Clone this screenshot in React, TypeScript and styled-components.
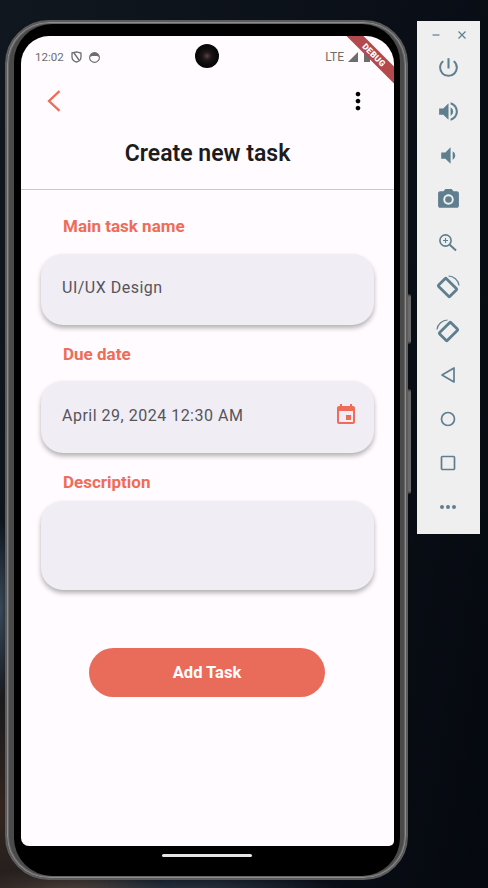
import React from "react";
import styled, { createGlobalStyle } from "styled-components";
import {
  MdPowerSettingsNew,
  MdVolumeUp,
  MdVolumeDown,
  MdCameraAlt,
  MdEvent,
  MdMoreVert,
} from "react-icons/md";

const GlobalStyle = createGlobalStyle`
  html, body {
    margin: 0;
    padding: 0;
    background: #070b12;
  }
  * {
    box-sizing: border-box;
  }
`;

const Page = styled.div`
  position: relative;
  width: 488px;
  height: 888px;
  overflow: hidden;
  padding: 20px 0 0 5px;
  display: flex;
  align-items: flex-start;
  gap: 9px;
  font-family: Roboto, "Liberation Sans", sans-serif;
  background:
    radial-gradient(ellipse 14px 90px at 0px 610px, #3a4a58 0%, rgba(58, 74, 88, 0) 100%),
    radial-gradient(ellipse 130px 170px at 0px 810px, #33261f 0%, rgba(51, 38, 31, 0) 100%),
    radial-gradient(ellipse 110px 24px at 60px 892px, #5a4a42 0%, rgba(90, 74, 66, 0) 100%),
    radial-gradient(ellipse 160px 20px at 190px 892px, #2a3644 0%, rgba(42, 54, 68, 0) 100%),
    linear-gradient(100deg, #10171f 0%, #0b1018 60%, #05080f 100%);
`;

const Shell = styled.div`
  position: relative;
  flex: none;
  width: 403px;
  height: 860px;
  padding: 2px 6px 2px 7px;
  border: 2px solid #5c5c5c;
  border-radius: 44px;
  background: #4a4a4a;
  box-shadow: inset 0 0 0 1px #8c8c8c, inset 0 0 0 2px #666;
`;

const SideKey = styled.div<{ $top: number; $height: number }>`
  position: absolute;
  left: 401px;
  top: ${(p) => p.$top}px;
  width: 3px;
  height: ${(p) => p.$height}px;
  border-radius: 0 2px 2px 0;
  background: linear-gradient(#2c2c2c 0, #6a6a6a 3px, #6a6a6a calc(100% - 3px), #2c2c2c 100%);
`;

const Bezel = styled.div`
  height: 100%;
  padding: 12px 6px 0 7px;
  border-radius: 38px;
  background: #000;
  display: flex;
  flex-direction: column;
`;

const Screen = styled.div`
  position: relative;
  flex: none;
  height: 810px;
  overflow: hidden;
  border-radius: 28px 28px 5px 8px;
  background: #fffbfe;
  display: flex;
  flex-direction: column;
`;

const Chin = styled.div`
  flex: 1;
  display: flex;
  justify-content: center;
  padding-top: 8px;
`;

const HomeBar = styled.div`
  width: 90px;
  height: 3px;
  border-radius: 2px;
  margin-right: 1px;
  background: #e6e6e6;
`;

const StatusBar = styled.div`
  flex: none;
  height: 43px;
  padding: 11px 0 0 14px;
  display: flex;
  align-items: flex-start;
  color: #6d6d6d;
  font-size: 11.5px;
  line-height: 20px;
`;

const StatusLeft = styled.div`
  display: flex;
  align-items: center;
  gap: 7px;
  height: 20px;
`;

const StatusRight = styled.div`
  margin-left: auto;
  padding-right: 24px;
  display: flex;
  align-items: center;
  gap: 4px;
  height: 20px;
  font-size: 12px;
`;

const BatterySlot = styled.span`
  display: flex;
  margin-left: 2px;
`;

const Camera = styled.div`
  position: absolute;
  left: 174px;
  top: 8px;
  width: 24px;
  height: 24px;
  border-radius: 50%;
  background: radial-gradient(circle at 50% 50%, #5a3f4a 0%, #1e1719 24%, #0c0c0c 48%, #000 100%);
`;

const DebugBanner = styled.div`
  position: absolute;
  left: 308px;
  top: 13px;
  width: 90px;
  height: 12px;
  transform: rotate(45deg);
  background: #b3494c;
  color: #fff;
  font-size: 8.5px;
  font-weight: 900;
  line-height: 12px;
  letter-spacing: 0.3px;
  text-align: center;
`;

const AppBar = styled.div`
  flex: none;
  height: 44px;
  padding: 0 22px 0 26px;
  display: flex;
  align-items: center;
  justify-content: space-between;
  color: #000;
`;

const Title = styled.h1`
  flex: none;
  margin: 16px 0 20px;
  color: #1d1b20;
  font-size: 23px;
  font-weight: 600;
  line-height: 30px;
  text-align: center;
`;

const Divider = styled.div`
  flex: none;
  height: 1px;
  background: #cbc8cc;
`;

const Form = styled.div`
  padding: 26px 20px 0;
  display: flex;
  flex-direction: column;
`;

const Label = styled.div<{ $gap: number }>`
  margin: 0 0 ${(p) => p.$gap}px 22px;
  color: #ee6c58;
  font-size: 17px;
  font-weight: 700;
  line-height: 20px;
`;

const Field = styled.div<{ $height: number; $gap?: number }>`
  height: ${(p) => p.$height}px;
  margin-bottom: ${(p) => p.$gap ?? 19}px;
  padding: 0 16px 4px 21px;
  border-radius: 22px;
  background: #f0edf4;
  box-shadow: 0 3px 5px rgba(0, 0, 0, 0.3);
  display: flex;
  align-items: center;
  justify-content: space-between;
  color: #57545b;
  font-size: 16px;
  font-weight: 400;
  letter-spacing: 0.5px;
`;

const ActionRow = styled.div`
  padding-right: 1px;
  display: flex;
  justify-content: center;
`;

const AddButton = styled.button`
  width: 236px;
  height: 49px;
  padding: 0;
  border: 0;
  border-radius: 25px;
  background: #e96c5b;
  color: #fff;
  font-family: inherit;
  font-size: 16.5px;
  font-weight: 700;
`;

const ToolPanel = styled.div`
  flex: none;
  width: 63px;
  height: 513px;
  margin-top: 1px;
  background: #efefef;
  display: flex;
  flex-direction: column;
  color: #5f7f8f;
`;

const WindowControls = styled.div`
  height: 24px;
  padding: 4px 13px 0 14px;
  display: flex;
  align-items: center;
  justify-content: space-between;
`;

const ToolSlot = styled.div`
  flex: none;
  height: 44px;
  padding-right: 1px;
  display: flex;
  align-items: center;
  justify-content: center;
`;

const BackArrow = () => (
  <svg width="14" height="24" viewBox="0 0 14 24" fill="none" stroke="#ee6c58" strokeWidth="2.3">
    <path d="M12.5 2.2 L2 12 L12.5 21.8" />
  </svg>
);

const ShieldIcon = () => (
  <svg width="11" height="12" viewBox="0 0 11 12" fill="none" stroke="#6d6d6d" strokeWidth="1.3">
    <path d="M1 2 L5.5 0.8 L10 2 V6 C10 8.6 7.8 10.4 5.5 11.2 C3.2 10.4 1 8.6 1 6 Z" />
    <path d="M3 2 L8 9" />
  </svg>
);

const FaceIcon = () => (
  <svg width="11" height="11" viewBox="0 0 11 11">
    <circle cx="5.5" cy="5.5" r="4.9" fill="none" stroke="#6d6d6d" strokeWidth="1.1" />
    <path d="M1 5 C1 2 3 0.8 5.5 0.8 C8 0.8 10 2 10 5 L8 4 H3 Z" fill="#6d6d6d" />
  </svg>
);

const SignalIcon = () => (
  <svg width="10" height="10" viewBox="0 0 10 10">
    <path d="M10 0 V10 H0 Z" fill="#6d6d6d" />
  </svg>
);

const BatteryIcon = () => (
  <svg width="6" height="10" viewBox="0 0 6 10">
    <rect width="6" height="10" fill="#6d6d6d" />
  </svg>
);

const MinimizeIcon = () => (
  <svg width="10" height="10" viewBox="0 0 10 10" stroke="#5f7f8f" strokeWidth="1.2">
    <path d="M1.5 5 H8.5" />
  </svg>
);

const CloseIcon = () => (
  <svg width="10" height="10" viewBox="0 0 10 10" stroke="#5f7f8f" strokeWidth="1.2">
    <path d="M1.5 1.5 L8.5 8.5 M8.5 1.5 L1.5 8.5" />
  </svg>
);

const ZoomIcon = () => (
  <svg width="20" height="20" viewBox="0 0 20 20" fill="none" stroke="currentColor" strokeWidth="1.6">
    <circle cx="7.5" cy="7.5" r="5.6" />
    <path d="M7.5 5 V10 M5 7.5 H10" strokeWidth="1.1" />
    <path d="M11.5 11.5 L18 17.5" strokeWidth="2" />
  </svg>
);

const RotateIcon = ({ flip }: { flip?: boolean }) => (
  <svg width="26" height="26" viewBox="0 0 26 26" fill="none" stroke="currentColor" style={flip ? { transform: "scaleX(-1)" } : undefined}>
    <rect x="7" y="5.5" width="11" height="16" rx="1" strokeWidth="2.8" transform="rotate(-45 12.5 13.5)" />
    <path d="M13.5 2 C18.5 2 23.5 6 24 11.5" strokeWidth="1.2" />
  </svg>
);

const BackTriangle = () => (
  <svg width="16" height="18" viewBox="0 0 16 18" fill="none" stroke="currentColor" strokeWidth="1.7">
    <path d="M14 2 V16 L2 9 Z" strokeLinejoin="round" />
  </svg>
);

const HomeCircle = () => (
  <svg width="16" height="16" viewBox="0 0 16 16" fill="none" stroke="currentColor" strokeWidth="1.7">
    <circle cx="8" cy="8" r="6.5" />
  </svg>
);

const RecentSquare = () => (
  <svg width="16" height="16" viewBox="0 0 16 16" fill="none" stroke="currentColor" strokeWidth="1.7">
    <rect x="1.5" y="1.5" width="13" height="13" rx="1" />
  </svg>
);

const MoreDots = () => (
  <svg width="18" height="6" viewBox="0 0 18 6" fill="currentColor">
    <circle cx="3" cy="3" r="2" />
    <circle cx="9" cy="3" r="2" />
    <circle cx="15" cy="3" r="2" />
  </svg>
);

const App = () => {
  return (
    <Page>
      <GlobalStyle />
      <Shell>
        <SideKey $top={272} $height={50} />
        <SideKey $top={367} $height={105} />
        <Bezel>
          <Screen>
            <StatusBar>
              <StatusLeft>
                <span>12:02</span>
                <ShieldIcon />
                <FaceIcon />
              </StatusLeft>
              <StatusRight>
                <span>LTE</span>
                <SignalIcon />
                <BatterySlot>
                  <BatteryIcon />
                </BatterySlot>
              </StatusRight>
            </StatusBar>
            <Camera />
            <DebugBanner>DEBUG</DebugBanner>
            <AppBar>
              <BackArrow />
              <MdMoreVert size={28} />
            </AppBar>
            <Title>Create new task</Title>
            <Divider />
            <Form>
              <Label $gap={18}>Main task name</Label>
              <Field $height={71}>UI/UX Design</Field>
              <Label $gap={17}>Due date</Label>
              <Field $height={72}>
                April 29, 2024 12:30 AM
                <MdEvent size={24} color="#ee6c58" />
              </Field>
              <Label $gap={9}>Description</Label>
              <Field $height={89} $gap={58} />
              <ActionRow>
                <AddButton>Add Task</AddButton>
              </ActionRow>
            </Form>
          </Screen>
          <Chin>
            <HomeBar />
          </Chin>
        </Bezel>
      </Shell>
      <ToolPanel>
        <WindowControls>
          <MinimizeIcon />
          <CloseIcon />
        </WindowControls>
        <ToolSlot><MdPowerSettingsNew size={25} /></ToolSlot>
        <ToolSlot><MdVolumeUp size={25} /></ToolSlot>
        <ToolSlot><MdVolumeDown size={25} /></ToolSlot>
        <ToolSlot><MdCameraAlt size={25} /></ToolSlot>
        <ToolSlot><ZoomIcon /></ToolSlot>
        <ToolSlot><RotateIcon /></ToolSlot>
        <ToolSlot><RotateIcon flip /></ToolSlot>
        <ToolSlot><BackTriangle /></ToolSlot>
        <ToolSlot><HomeCircle /></ToolSlot>
        <ToolSlot><RecentSquare /></ToolSlot>
        <ToolSlot><MoreDots /></ToolSlot>
      </ToolPanel>
    </Page>
  );
};

export default App;
